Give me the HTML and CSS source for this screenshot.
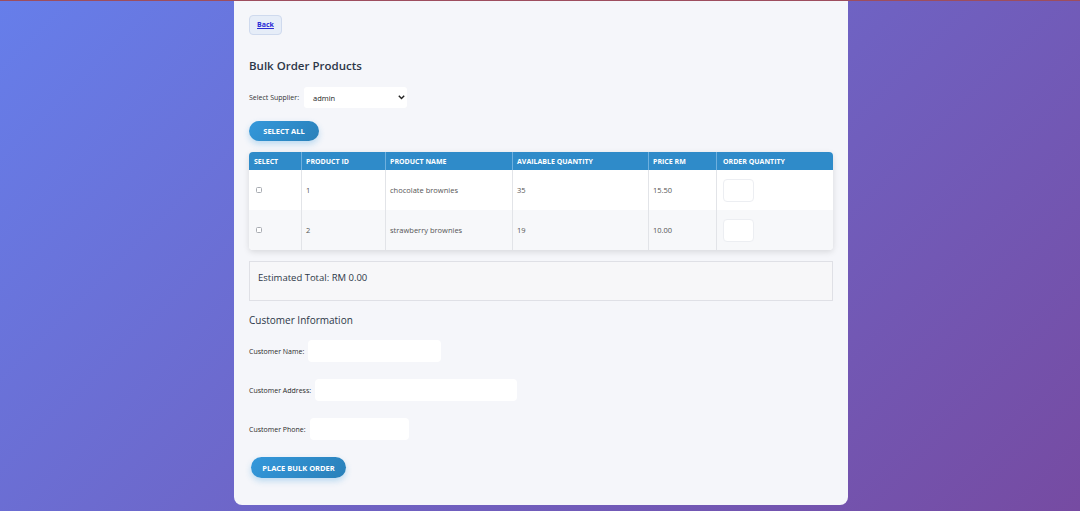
FILE: index.html
```html
<!DOCTYPE html>
<html>
<head>
<meta charset="utf-8">
<link rel="stylesheet" href="styles.css">
</head>
<body>
<div class="card">
  <a class="back" href="#">Back</a>
  <h2 class="title">Bulk Order Products</h2>
  <div class="supplier">
    <label>Select Supplier:</label>
    <div class="select"><span>admin</span><svg width="7" height="5" viewBox="0 0 7 5"><path d="M0.8 0.8 L3.5 3.6 L6.2 0.8" fill="none" stroke="#222" stroke-width="1.4"/></svg></div>
  </div>
  <button class="pill select-all">SELECT ALL</button>
  <div class="table">
    <div class="row head">
      <div class="c c1">SELECT</div>
      <div class="c c2">PRODUCT ID</div>
      <div class="c c3">PRODUCT NAME</div>
      <div class="c c4">AVAILABLE QUANTITY</div>
      <div class="c c5">PRICE RM</div>
      <div class="c c6">ORDER QUANTITY</div>
    </div>
    <div class="row">
      <div class="c c1"><span class="cb"></span></div>
      <div class="c c2">1</div>
      <div class="c c3">chocolate brownies</div>
      <div class="c c4">35</div>
      <div class="c c5">15.50</div>
      <div class="c c6"><span class="qty"></span></div>
    </div>
    <div class="row alt">
      <div class="c c1"><span class="cb"></span></div>
      <div class="c c2">2</div>
      <div class="c c3">strawberry brownies</div>
      <div class="c c4">19</div>
      <div class="c c5">10.00</div>
      <div class="c c6"><span class="qty"></span></div>
    </div>
  </div>
  <div class="total">Estimated Total: RM 0.00</div>
  <h3 class="sub">Customer Information</h3>
  <div class="field"><label>Customer Name:</label><span class="inp w-name"></span></div>
  <div class="field"><label>Customer Address:</label><span class="inp w-addr"></span></div>
  <div class="field"><label>Customer Phone:</label><span class="inp w-phone"></span></div>
  <button class="pill place">PLACE BULK ORDER</button>
</div>
</body>
</html>
```

FILE: styles.css
```css
* { box-sizing: border-box; }
html, body { height: 100%; }
body {
  margin: 0;
  padding-left: 2px;
  border-top: 1px solid #9d4d5e;
  background: linear-gradient(135deg, #667eea 0%, #764ba2 100%);
  font-family: "Open Sans", "Noto Sans", sans-serif;
  color: #2d3748;
}
.card {
  width: 614px;
  margin: 0 auto;
  background: #f5f6fa;
  border-radius: 0 0 8px 8px;
  padding: 14px 15px 27px 15px;
  display: flex;
  flex-direction: column;
  align-items: flex-start;
}
.back {
  display: inline-block;
  width: 33px;
  height: 20px;
  line-height: 18px;
  text-align: center;
  font-size: 7px;
  font-weight: 700;
  color: #2b2bd6;
  background: #e6edf8;
  border: 1px solid #cfdaee;
  border-radius: 4px;
}
.title {
  margin: 22px 0 0 0;
  font-size: 11.5px;
  font-weight: 600;
  color: #2d3748;
  line-height: 17px;
}
.supplier {
  margin-top: 13px;
  display: flex;
  align-items: center;
  gap: 5px;
  font-size: 7px;
  color: #333;
}
.select {
  width: 103px;
  height: 21px;
  background: #fff;
  border-radius: 3px;
  display: flex;
  align-items: center;
  justify-content: space-between;
  padding: 0 2px 0 9px;
  font-size: 7.5px;
  color: #222;
}
.pill {
  border: none;
  color: #fff;
  font-family: "Open Sans", "Noto Sans", sans-serif;
  font-weight: 700;
  font-size: 7.5px;
  background: linear-gradient(135deg, #3498db, #2980b9);
  box-shadow: 0 3px 6px rgba(52, 152, 219, 0.3);
  padding: 0;
}
.select-all {
  margin-top: 13px;
  width: 70px;
  height: 20px;
  border-radius: 10px;
}
.table {
  margin-top: 11px;
  width: 584px;
  border-radius: 4px;
  overflow: hidden;
  box-shadow: 0 2px 6px rgba(0, 0, 0, 0.12);
  background: #fff;
}
.row {
  display: flex;
  height: 40px;
  font-size: 7.5px;
  color: #555;
}
.row.alt { background: #f7f8fa; }
.row.head {
  height: 18px;
  background: #2f8bc9;
  color: #fff;
  font-weight: 700;
  font-size: 7px;
}
.c {
  display: flex;
  align-items: center;
  padding-left: 4px;
  border-right: 1px solid #e2e4e8;
}
.head .c { border-right-color: #6fb0de; }
.c6, .head .c6 { border-right: none; }
.c1 { width: 53px; padding-left: 5px; }
.c2 { width: 84px; }
.c3 { width: 127px; }
.c4 { width: 136px; }
.c5 { width: 68px; }
.c6 { flex: 1; padding-left: 6px; }
.row:not(.head) .c1 { padding-left: 7px; }
.cb {
  width: 6px;
  height: 6px;
  border: 1px solid #a8acb2;
  border-radius: 1.5px;
  background: #fff;
}
.qty {
  width: 31px;
  height: 23px;
  background: #fff;
  border: 1px solid #eceef2;
  border-radius: 4px;
}
.total {
  margin-top: 11px;
  width: 584px;
  height: 40px;
  background: #f7f7f9;
  border: 1px solid #dfe0e6;
  padding: 9px 0 0 8px;
  font-size: 9.5px;
  font-weight: 500;
  color: #2d3748;
}
.sub {
  margin: 12px 0 0 0;
  font-size: 10px;
  font-weight: 500;
  line-height: 14px;
  color: #2d3748;
}
.field {
  display: flex;
  align-items: center;
  gap: 4px;
  font-size: 7px;
  color: #2a2a2a;
  margin-top: 13px;
}
.field + .field { margin-top: 17px; }
.inp {
  height: 22px;
  background: #fff;
  border-radius: 4px;
}
.w-name { width: 133px; }
.w-addr { width: 202px; }
.w-phone { width: 99px; }
.place {
  margin: 17px 0 0 2px;
  width: 95px;
  height: 21px;
  border-radius: 11px;
}
```
